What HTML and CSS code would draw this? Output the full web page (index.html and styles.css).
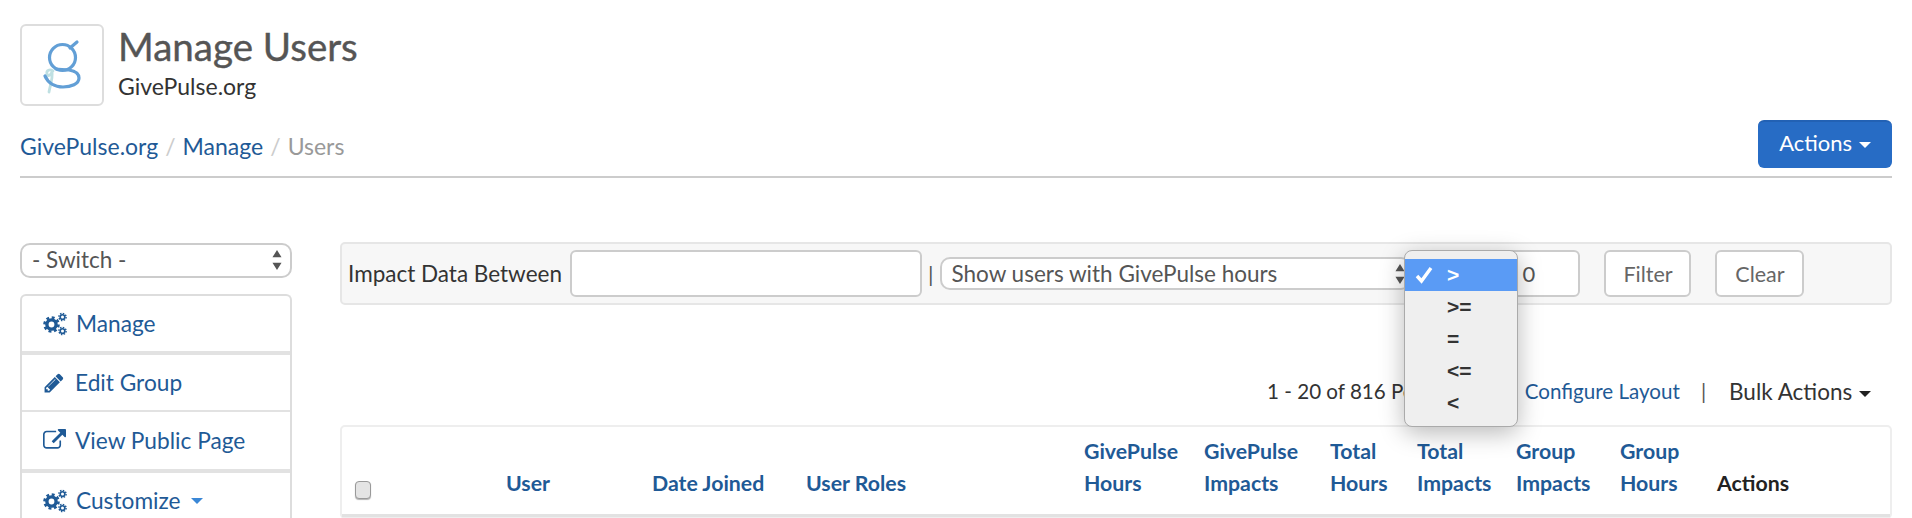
FILE: index.html
```html
<!DOCTYPE html>
<html lang="en">
<head>
  <meta charset="UTF-8">
  <title>Manage Users</title>
  <link rel="stylesheet" href="styles.css">
</head>
<body>

  <svg class="defs" width="0" height="0">
    <symbol id="cogs" viewBox="0 0 24 24">
      <circle cx="8.5" cy="12.5" r="4.6" fill="none" stroke="currentColor" stroke-width="3.4"/>
      <circle cx="8.5" cy="12.5" r="7" fill="none" stroke="currentColor" stroke-width="2.6" stroke-dasharray="2.9 2.6"/>
      <circle cx="19.5" cy="5" r="2.3" fill="none" stroke="currentColor" stroke-width="1.6"/>
      <circle cx="19.5" cy="5" r="3.6" fill="none" stroke="currentColor" stroke-width="1.4" stroke-dasharray="1.5 1.3"/>
      <circle cx="19.5" cy="19" r="2.3" fill="none" stroke="currentColor" stroke-width="1.6"/>
      <circle cx="19.5" cy="19" r="3.6" fill="none" stroke="currentColor" stroke-width="1.4" stroke-dasharray="1.5 1.3"/>
    </symbol>
    <symbol id="updown" viewBox="0 0 10 22">
      <path d="M5 0l5 8H0zM5 22l-5-8h10z" fill="currentColor"/>
    </symbol>
  </svg>

  <header class="page-head">
    <div class="brand">
      <div class="logo">
        <svg width="82" height="80" viewBox="1 1 82 80">
          <path d="M32 46c-3-2-7-1-6 3 1 3 4 1 5-2 1 6-2 14-3 20" fill="none" stroke="#bfe0e2" stroke-width="2.8" stroke-linecap="round"/>
          <circle cx="41.5" cy="32.5" r="13" fill="none" stroke="#629fd6" stroke-width="3.2"/>
          <path d="M49 23l7-6M35 44c4 1 8 0 13 1 6 1 10 4 10 8 0 6-8 9-16 9-8 0-15-4-18-11" fill="none" stroke="#629fd6" stroke-width="3.2" stroke-linecap="round"/>
        </svg>
      </div>
      <div>
        <h1>Manage Users</h1>
        <div class="org">GivePulse.org</div>
      </div>
    </div>
    <div class="crumb-row">
      <nav class="crumbs">
        <a href="#">GivePulse.org</a><span class="sep">/</span><a href="#">Manage</a><span class="sep">/</span><span class="here">Users</span>
      </nav>
      <button class="btn-primary">Actions <span class="caret"></span></button>
    </div>
  </header>

  <div class="layout">
    <aside class="sidebar">
      <div class="switch">
        <span>- Switch -</span>
        <svg class="updown" width="10" height="20"><use href="#updown"/></svg>
      </div>
      <ul class="side-nav">
        <li><a href="#"><svg class="ico" width="24" height="24"><use href="#cogs"/></svg>Manage</a></li>
        <li><a href="#">
          <svg class="ico ico-pen" width="22" height="22" viewBox="0 0 1792 1792"><path fill="currentColor" d="M491 1536l91-91-235-235-91 91v107h128v128h107zm523-928q0-22-22-22-10 0-17 7l-542 542q-7 7-7 17 0 22 22 22 10 0 17-7l542-542q7-7 7-17zm-54-192l416 416-832 832h-416v-416zm683 96q0 53-37 90l-166 166-416-416 166-165q36-38 90-38 53 0 91 38l235 234q37 39 37 91z"/></svg>Edit Group</a></li>
        <li><a href="#">
          <svg class="ico" width="23" height="23" viewBox="0 0 1792 1792"><path fill="currentColor" d="M1408 928v320q0 119-84.5 203.5t-203.5 84.5h-832q-119 0-203.5-84.5t-84.5-203.5v-832q0-119 84.5-203.5t203.5-84.5h704q14 0 23 9t9 23v64q0 14-9 23t-23 9h-704q-66 0-113 47t-47 113v832q0 66 47 113t113 47h832q66 0 113-47t47-113v-320q0-14 9-23t23-9h64q14 0 23 9t9 23zm384-864v512q0 26-19 45t-45 19-45-19l-176-176-652 652q-10 10-23 10t-23-10l-114-114q-10-10-10-23t10-23l652-652-176-176q-19-19-19-45t19-45 45-19h512q26 0 45 19t19 45z"/></svg>View Public Page</a></li>
        <li><a href="#"><svg class="ico" width="24" height="24"><use href="#cogs"/></svg>Customize <span class="caret caret-blue"></span></a></li>
      </ul>
    </aside>

    <main class="content">
      <div class="filter-bar">
        <label>Impact Data Between</label>
        <input class="field date-range" type="text">
        <span class="pipe">|</span>
        <div class="fake-select">
          <span>Show users with GivePulse hours</span>
          <svg class="updown" width="10" height="20"><use href="#updown"/></svg>
        </div>
        <input class="field amount" type="text" value="0">
        <button class="btn-plain btn-filter">Filter</button>
        <button class="btn-plain">Clear</button>

        <ul class="popup">
          <li class="picked">
            <svg class="tick" width="18" height="18" viewBox="0 0 18 18"><path d="M2 10l4.5 5L16 2" fill="none" stroke="#fff" stroke-width="3.4"/></svg>&gt;
          </li>
          <li>&gt;=</li>
          <li>=</li>
          <li>&lt;=</li>
          <li>&lt;</li>
        </ul>
      </div>

      <div class="list-tools">
        <span>1 - 20 of 816 People</span>
        <a href="#" class="configure"><svg class="ico-small" width="18" height="18"><use href="#cogs"/></svg>Configure Layout</a>
        <span class="pipe">|</span>
        <span class="bulk">Bulk Actions <span class="caret caret-dark"></span></span>
      </div>

      <table class="users">
        <colgroup>
          <col class="c-check"><col class="c-user"><col class="c-date"><col class="c-roles">
          <col class="c-gph"><col class="c-gpi"><col class="c-th"><col class="c-ti">
          <col class="c-gi"><col class="c-gh"><col>
        </colgroup>
        <thead>
          <tr>
            <th><input type="checkbox" class="check"></th>
            <th><a href="#">User</a></th>
            <th><a href="#">Date Joined</a></th>
            <th><a href="#">User Roles</a></th>
            <th><a href="#">GivePulse<br>Hours</a></th>
            <th><a href="#">GivePulse<br>Impacts</a></th>
            <th><a href="#">Total<br>Hours</a></th>
            <th><a href="#">Total<br>Impacts</a></th>
            <th><a href="#">Group<br>Impacts</a></th>
            <th><a href="#">Group<br>Hours</a></th>
            <th>Actions</th>
          </tr>
        </thead>
      </table>
    </main>
  </div>

</body>
</html>
```

FILE: styles.css
```css
* {
  margin: 0;
  padding: 0;
  box-sizing: border-box;
}
html, body {
  height: 518px;
  overflow: hidden;
}
body {
  font-family: 'Lato', 'Open Sans', sans-serif;
  font-size: 22px;
  color: #333;
  background: #fff;
  padding: 24px 20px 0;
}
a {
  color: #1f5a96;
  text-decoration: none;
}
ul {
  list-style: none;
}
.defs {
  position: absolute;
}

/* header */
.brand {
  display: flex;
  gap: 14px;
}
.logo {
  width: 84px;
  height: 82px;
  border: 2px solid #ddd;
  border-radius: 6px;
}
.logo svg {
  display: block;
}
h1 {
  font-size: 38.5px;
  font-weight: 400;
  line-height: 44px;
  color: #555;
  -webkit-text-stroke: 0.4px #555;
}
.org {
  font-size: 23px;
  line-height: 26px;
  margin-top: 5px;
  color: #333;
}
.crumb-row {
  display: flex;
  justify-content: space-between;
  align-items: center;
  margin-top: 14px;
  padding-bottom: 8px;
  border-bottom: 2px solid #ccc;
}
.crumbs {
  font-size: 23px;
  padding-top: 3px;
}
.sep {
  color: #ccc;
  padding: 0 7px;
}
.here {
  color: #999;
}
.btn-primary {
  width: 134px;
  height: 48px;
  padding: 0 0 5px;
  font-family: inherit;
  font-size: 22px;
  color: #fff;
  background: #276cc5;
  border: none;
  border-top: 2px solid #2261b4;
  border-radius: 6px;
}
.caret {
  display: inline-block;
  vertical-align: middle;
  margin-left: 1px;
  border-top: 6px solid #fff;
  border-left: 6px solid transparent;
  border-right: 6px solid transparent;
}
.caret-blue {
  border-top-color: #3a87d6;
  margin-left: 6px;
}
.caret-dark {
  border-top-color: #222;
}

/* page columns */
.layout {
  display: flex;
  gap: 48px;
  margin-top: 64px;
}
.sidebar {
  width: 272px;
  flex: none;
}
.switch {
  display: flex;
  justify-content: space-between;
  align-items: center;
  height: 35px;
  margin-top: 1px;
  padding: 0 8px 3px 10px;
  font-size: 22.5px;
  color: #555;
  background: #fff;
  border: 2px solid #ccc;
  border-radius: 10px;
}
.updown {
  color: #555;
  flex: none;
}
.switch .updown {
  margin-bottom: -2px;
}
.side-nav {
  margin-top: 16px;
  border: 2px solid #ddd;
  border-bottom: none;
  border-radius: 6px 6px 0 0;
}
.side-nav li {
  height: 59px;
  border-bottom: 4px solid #e2e2e2;
}
.side-nav li:nth-child(2) {
  height: 57px;
  border-bottom-width: 2px;
}
.side-nav li:nth-child(3) {
  height: 61px;
}
.side-nav a {
  display: flex;
  align-items: center;
  height: 100%;
  padding-left: 21px;
  font-size: 22.7px;
}
.ico {
  flex: none;
  margin-right: 9px;
}
.ico-pen {
  margin-right: 10px;
}
.side-nav .caret {
  margin-left: 10px;
}

/* filter */
.content {
  flex: 1;
  min-width: 0;
}
.filter-bar {
  position: relative;
  display: flex;
  align-items: center;
  height: 63px;
  padding: 0 6px;
  background: #f7f7f7;
  border: 2px solid #e6e6e6;
  border-radius: 5px;
}
.filter-bar label {
  font-size: 22.5px;
  white-space: nowrap;
}
.field {
  height: 47px;
  font-family: inherit;
  font-size: 22px;
  color: #555;
  background: #fff;
  border: 2px solid #ccc;
  border-radius: 6px;
}
.date-range {
  width: 352px;
  margin-left: 8px;
}
.pipe {
  color: #555;
}
.filter-bar .pipe {
  margin: 0 7px 0 6px;
}
.fake-select {
  display: flex;
  justify-content: space-between;
  align-items: center;
  width: 471px;
  height: 33px;
  padding: 0 4px 0 9px;
  font-size: 22.5px;
  color: #555;
  background: #fff;
  border: 2px solid #ccc;
  border-radius: 10px;
}
.amount {
  width: 90px;
  margin-left: 79px;
  padding-left: 30px;
}
.btn-plain {
  height: 47px;
  width: 87px;
  margin-left: 24px;
  font-family: inherit;
  font-size: 21.5px;
  color: #666;
  background: #fff;
  border: 2px solid #ccc;
  border-radius: 6px;
}
.btn-plain + .btn-plain {
  width: 89px;
}

/* native looking popup for the operator select */
.popup {
  position: absolute;
  left: 1062px;
  top: 6px;
  width: 114px;
  height: 177px;
  padding-top: 8px;
  background: #efefef;
  border: 1px solid #aaa;
  border-radius: 8px;
  box-shadow: 0 6px 24px rgba(0, 0, 0, 0.28);
  font-family: 'Liberation Sans', sans-serif;
  font-size: 21px;
  font-weight: 700;
  color: #333;
  z-index: 5;
}
.popup li {
  position: relative;
  height: 32px;
  line-height: 32px;
  padding-left: 42px;
}
.popup .picked {
  background: #5a9bf5;
  color: #fff;
}
.tick {
  position: absolute;
  left: 10px;
  top: 7px;
}

/* list */
.list-tools {
  display: flex;
  justify-content: flex-end;
  align-items: center;
  height: 30px;
  margin-top: 71px;
  padding-right: 21px;
  font-size: 20.6px;
}
.configure {
  display: flex;
  align-items: center;
  margin-left: 47px;
}
.ico-small {
  margin-right: 7px;
}
.list-tools .pipe {
  margin: 0 23px 0 21px;
}
.bulk {
  color: #333;
  font-size: 22.5px;
}
.users {
  width: 100%;
  margin-top: 19px;
  table-layout: fixed;
  border-collapse: separate;
  border-spacing: 0;
  background: #fff;
  border: 2px solid #eee;
  border-radius: 5px;
}
.c-check { width: 164px; }
.c-user { width: 146px; }
.c-date { width: 154px; }
.c-roles { width: 278px; }
.c-gph { width: 120px; }
.c-gpi { width: 126px; }
.c-th { width: 87px; }
.c-ti { width: 99px; }
.c-gi { width: 104px; }
.c-gh { width: 97px; }
.users th {
  height: 90px;
  padding-bottom: 15px;
  vertical-align: bottom;
  text-align: left;
  font-size: 21.3px;
  font-weight: 700;
  line-height: 32px;
  color: #222;
  border-bottom: 3px solid #e2e2e2;
}
.check {
  appearance: none;
  display: block;
  width: 16px;
  height: 18px;
  margin: 0 0 0 13px;
  background: #e4e4e4;
  border: 1px solid #999;
  border-radius: 4px;
  box-shadow: 0 1px 1px rgba(0, 0, 0, 0.3);
}
```
